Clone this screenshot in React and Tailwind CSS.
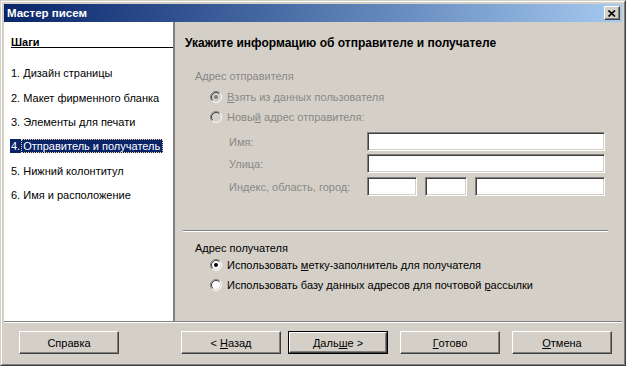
import clsx from "clsx";

const GRAY = "text-[#8a8884]";

const Radio = ({ checked, disabled }) => (
	<svg width="12" height="12" viewBox="0 0 12 12" className="shrink-0">
		<circle cx="6" cy="6" r="5" fill={disabled ? "#d4d0c8" : "#ffffff"} />
		<path d="M2.11 9.89 A5.5 5.5 0 0 1 9.89 2.11" fill="none" stroke="#808080" />
		<path d="M9.89 2.11 A5.5 5.5 0 0 1 2.11 9.89" fill="none" stroke="#ffffff" />
		<path d="M2.82 9.18 A4.5 4.5 0 0 1 9.18 2.82" fill="none" stroke="#404040" />
		<path d="M9.18 2.82 A4.5 4.5 0 0 1 2.82 9.18" fill="none" stroke="#d4d0c8" />
		{checked && <circle cx="6" cy="6" r="2" fill={disabled ? "#808080" : "#000000"} />}
	</svg>
);

const Field = ({ className }) => (
	<div
		className={clsx(
			"h-[19px] bg-white border border-t-[#808080] border-l-[#808080] border-r-white border-b-white shadow-[inset_1px_1px_#404040,inset_-1px_-1px_#d4d0c8]",
			className
		)}
	/>
);

const Button = ({ children, isDefault }) => (
	<div className={clsx("w-[100px] h-[23px]", isDefault && "border border-black")}>
		<div className="h-full w-full flex items-center justify-center border border-t-white border-l-white border-r-[#404040] border-b-[#404040] shadow-[inset_-1px_-1px_#808080]">
			{children}
		</div>
	</div>
);

const steps = [
	"1. Дизайн страницы",
	"2. Макет фирменного бланка",
	"3. Элементы для печати",
	"4. Отправитель и получатель",
	"5. Нижний колонтитул",
	"6. Имя и расположение",
];

export default function App() {
	return (
		<div className="w-[626px] h-[366px] bg-[#d4d0c8] border border-t-[#d4d0c8] border-l-[#d4d0c8] border-r-[#404040] border-b-[#404040] font-['Liberation_Sans',Arial,sans-serif] text-[11px] leading-[14px] text-black">
			<div className="h-full border border-t-white border-l-white border-r-[#808080] border-b-[#808080] p-[2px] flex flex-col">
				{/* title bar */}
				<div className="h-[18px] shrink-0 bg-linear-to-r from-[#0a246a] to-[#a6caf0] flex items-center justify-between pl-[3px] pr-[2px]">
					<span className="text-white font-bold text-[11.5px]">Мастер писем</span>
					<div className="w-[16px] h-[14px] bg-[#d4d0c8] border border-t-white border-l-white border-r-[#404040] border-b-[#404040] shadow-[inset_-1px_-1px_#808080] flex items-center justify-center">
						<svg width="8" height="7" viewBox="0 0 8 7">
							<path d="M0.5 0.5 L7 6.5 M7 0.5 L0.5 6.5" stroke="#000" strokeWidth="1.6" />
						</svg>
					</div>
				</div>

				{/* body */}
				<div className="flex-1 flex min-h-0">
					<div className="w-[171px] shrink-0 bg-white border-r-2 border-[#808080] flex flex-col">
						<div className="ml-[7px] mt-[13px] h-[13px] border-b border-black font-bold">Шаги</div>
						<div className="mt-[13px] flex flex-col pl-[7px]">
							{steps.map((s, i) =>
								i === 3 ? (
									<div key={s} className="h-[24.4px] flex items-center">
										<span className="h-[14px] w-[153px] -ml-[1px] pl-[1px] bg-[#0a246a] text-white flex items-center">
											<span>4.</span>
											<span className="h-[14px] flex-1 border border-dotted border-[#f5db95] flex items-center pl-[1px] ml-[1px]">
												Отправитель и получатель
											</span>
										</span>
									</div>
								) : (
									<div key={s} className="h-[24.4px] flex items-center">
										{s}
									</div>
								)
							)}
						</div>
					</div>

					<div className="flex-1 flex flex-col">
						<div className="mt-[14px] pl-[10px] h-[14px] font-bold text-[12px]">
							Укажите информацию об отправителе и получателе
						</div>
						<div className={clsx("mt-[19px] pl-[20px] h-[14px]", GRAY)}>Адрес отправителя</div>
						<div className={clsx("mt-[4px] h-[20px] pl-[35px] flex items-center gap-[5px]", GRAY)}>
							<Radio checked disabled />
							<span>
								<u>В</u>зять из данных пользователя
							</span>
						</div>
						<div className={clsx("h-[20px] pl-[35px] flex items-center gap-[5px]", GRAY)}>
							<Radio disabled />
							<span>
								Новы<u>й</u> адрес отправителя:
							</span>
						</div>
						<div className="mt-[5px] h-[19px] flex items-center">
							<span className={clsx("w-[192px] pl-[54px]", GRAY)}>Имя:</span>
							<Field className="w-[238px]" />
						</div>
						<div className="mt-[3px] h-[19px] flex items-center">
							<span className={clsx("w-[192px] pl-[54px]", GRAY)}>Улица:</span>
							<Field className="w-[238px]" />
						</div>
						<div className="mt-[4px] h-[19px] flex items-center">
							<span className={clsx("w-[192px] pl-[54px]", GRAY)}>Индекс, область, город:</span>
							<Field className="w-[50px]" />
							<Field className="w-[42px] ml-[8px]" />
							<Field className="w-[130px] ml-[8px]" />
						</div>
						<div className="mt-[34px] ml-[8px] w-[425px] h-[2px] border-t border-t-[#808080] border-b border-b-white" />
						<div className="mt-[9px] pl-[20px] h-[14px]">Адрес получателя</div>
						<div className="h-[20px] pl-[35px] flex items-center gap-[5px]">
							<Radio checked />
							<span>
								Использовать <u>м</u>етку-заполнитель для получателя
							</span>
						</div>
						<div className="h-[20px] pl-[35px] flex items-center gap-[5px]">
							<Radio />
							<span>
								Использовать базу данных адресов для почтовой <u>р</u>ассылки
							</span>
						</div>
					</div>
				</div>

				<div className="h-[2px] shrink-0 border-t border-t-[#808080] border-b border-b-white" />

				{/* footer */}
				<div className="h-[39px] shrink-0 flex items-center pl-[15px]">
					<Button>Справка</Button>
					<div className="ml-[62px]">
						<Button>
							&lt; <u className="ml-[3px]">Н</u>азад
						</Button>
					</div>
					<div className="ml-[7px]">
						<Button isDefault>
							Даль<u>ш</u>е &gt;
						</Button>
					</div>
					<div className="ml-[12px]">
						<Button>
							<u>Г</u>отово
						</Button>
					</div>
					<div className="ml-[12px]">
						<Button>
							<u>О</u>тмена
						</Button>
					</div>
				</div>
			</div>
		</div>
	);
}
